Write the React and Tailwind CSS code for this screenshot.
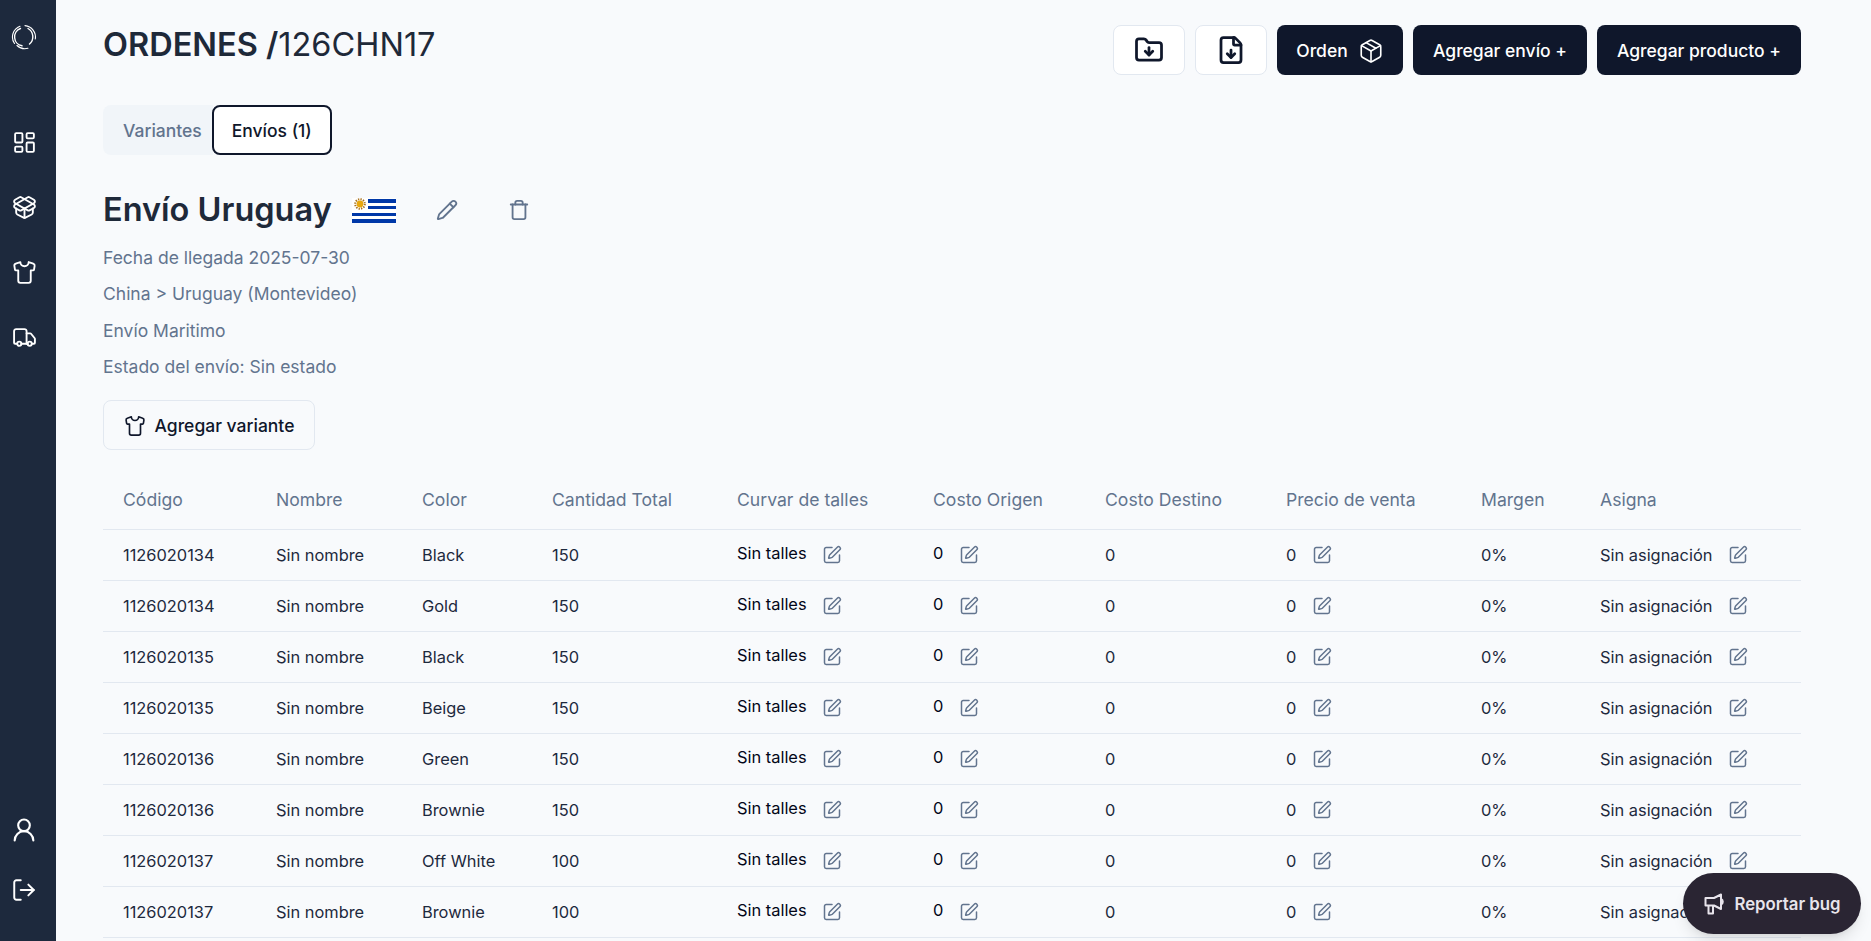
import { LayoutDashboard, PackageOpen, Shirt, Truck, UserRound, LogOut, FolderDown, FileDown, Package, Pencil, Trash, SquarePen } from "lucide-react"

const rows = [
  ["1126020134", "Black", "150"],
  ["1126020134", "Gold", "150"],
  ["1126020135", "Black", "150"],
  ["1126020135", "Beige", "150"],
  ["1126020136", "Green", "150"],
  ["1126020136", "Brownie", "150"],
  ["1126020137", "Off White", "100"],
  ["1126020137", "Brownie", "100"],
]

const headers = [
  ["Código", "w-[153px]"],
  ["Nombre", "w-[146px]"],
  ["Color", "w-[130px]"],
  ["Cantidad Total", "w-[185px]"],
  ["Curvar de talles", "w-[196px]"],
  ["Costo Origen", "w-[172px]"],
  ["Costo Destino", "w-[181px]"],
  ["Precio de venta", "w-[195px]"],
  ["Margen", "w-[119px]"],
  ["Asigna", "w-[221px]"],
]

function Logo() {
  return (
    <svg width="26" height="26" viewBox="0 0 26 26" fill="none" stroke="white" strokeLinecap="round">
      <path d="M9 2.2A11.5 11.5 0 0 0 3.5 19.5" strokeWidth="1.1" />
      <path d="M6 21.5A11.5 11.5 0 0 0 17 24.3" strokeWidth="1.1" />
      <path d="M14 1.6A11.5 11.5 0 0 1 24.3 15" strokeWidth="1.1" />
      <path d="M9.5 4.5A9 9 0 0 0 11 21.8" strokeWidth="1.4" />
      <path d="M17 4.5A9.5 9.5 0 0 1 18.5 20" strokeWidth="1.4" />
    </svg>
  )
}

function Flag() {
  return (
    <svg width="44" height="25" viewBox="0 0 44 25">
      <rect width="44" height="25" fill="white" />
      <rect x="16" y="1" width="28" height="4" fill="#0038a8" />
      <rect x="16" y="8" width="28" height="3" fill="#0038a8" />
      <rect x="0" y="15" width="44" height="3" fill="#0038a8" />
      <rect x="0" y="21" width="44" height="4" fill="#0038a8" />
      <circle cx="8" cy="6" r="4.8" fill="none" stroke="#a8701a" strokeWidth="2" strokeDasharray="1.3 1.2" />
      <circle cx="8" cy="6" r="3.4" fill="#e8a80f" />
    </svg>
  )
}

function Megaphone() {
  return (
    <svg width="24" height="24" viewBox="0 0 24 24" fill="none" stroke="currentColor" strokeWidth="2" strokeLinejoin="round">
      <path d="M2.5 6H11L18 2.5V17L11 13.5H2.5Z" />
      <path d="M5.5 13.5V21.5H10V13.5" />
      <path d="M18 7a3 3 0 0 1 0 5.5" />
    </svg>
  )
}

function EditCell({ children, gap, raised }) {
  return (
    <div className={`flex items-center ${gap}`}>
      <span className={raised ? "-translate-y-[2px] text-slate-950" : ""}>{children}</span>
      <SquarePen size={20} strokeWidth={1.8} className="text-slate-500" />
    </div>
  )
}

export default function App() {
  return (
    <div className="flex h-screen overflow-hidden bg-slate-50 font-['Inter',sans-serif] text-[17.5px] leading-6 relative">

      {/* Sidebar */}
      <div className="w-[56px] shrink-0 bg-slate-800 flex flex-col items-center pr-[8px] text-white">
        <div className="mt-6"><Logo /></div>
        <div className="mt-[80px] flex flex-col items-center gap-[40px]">
          <LayoutDashboard size={25} strokeWidth={1.8} />
          <PackageOpen size={25} strokeWidth={1.8} />
          <Shirt size={25} strokeWidth={1.8} />
          <Truck size={25} strokeWidth={1.8} />
        </div>
        <div className="mt-auto mb-[38px] flex flex-col items-center gap-[33px]">
          <UserRound size={28} strokeWidth={1.8} />
          <LogOut size={26} strokeWidth={1.8} />
        </div>
      </div>

      {/* Main */}
      <div className="flex-1 pl-[47px] pr-[70px] pt-[25px]">

        <div className="flex justify-between items-start">
          <h1 className="text-[32.5px] leading-[40px] text-gray-800">
            <span className="font-semibold">ORDENES /</span>126CHN17
          </h1>
          <div className="flex gap-[10px]">
            <button className="w-[72px] h-[50px] flex items-center justify-center bg-white border border-slate-200 rounded-lg text-slate-900">
              <FolderDown size={30} strokeWidth={2.2} />
            </button>
            <button className="w-[72px] h-[50px] flex items-center justify-center bg-white border border-slate-200 rounded-lg text-slate-900">
              <FileDown size={30} strokeWidth={2.2} />
            </button>
            <button className="w-[126px] h-[50px] pt-px flex items-center justify-center gap-[10px] bg-slate-900 rounded-lg text-white font-medium">
              Orden <Package size={26} strokeWidth={1.5} />
            </button>
            <button className="w-[174px] h-[50px] pt-px bg-slate-900 rounded-lg text-white font-medium">Agregar envío +</button>
            <button className="w-[204px] h-[50px] pt-px bg-slate-900 rounded-lg text-white font-medium">Agregar producto +</button>
          </div>
        </div>

        {/* Tabs */}
        <div className="mt-[30px] flex">
          <div className="h-[50px] pt-px bg-slate-100 rounded-l-lg pl-5 pr-[11px] flex items-center text-slate-500 font-medium">Variantes</div>
          <div className="h-[50px] pt-px w-[120px] -ml-px bg-white border-2 border-slate-900 rounded-lg flex items-center justify-center font-medium text-slate-900">Envíos (1)</div>
        </div>

        {/* Envio */}
        <div className="mt-[35px] flex items-center h-[40px]">
          <h2 className="text-[32.5px] font-semibold text-gray-800">Envío Uruguay</h2>
          <div className="ml-[20px]"><Flag /></div>
          <Pencil size={22} strokeWidth={2} className="ml-[40px] text-slate-500" />
          <Trash size={22} strokeWidth={2} className="ml-[50px] text-slate-500" />
        </div>
        <div className="mt-[16px] text-slate-500 flex flex-col gap-[12.4px]">
          <p>Fecha de llegada 2025-07-30</p>
          <p>China &gt; Uruguay (Montevideo)</p>
          <p>Envío Maritimo</p>
          <p>Estado del envío: Sin estado</p>
        </div>
        <button className="mt-[21px] w-[212px] h-[50px] pt-px flex items-center justify-center gap-[9px] border border-slate-200 rounded-lg text-slate-900 font-medium">
          <Shirt size={22} strokeWidth={1.8} /> Agregar variante
        </button>

        {/* Tabla */}
        <table className="mt-[24px] w-[1698px] table-fixed border-collapse">
          <thead>
            <tr className="h-[55px] border-b border-slate-200">
              {headers.map(([h, w]) => (
                <th key={h} className={`${w} pl-5 pb-[2px] text-left text-[17.6px] font-normal text-slate-500`}>{h}</th>
              ))}
            </tr>
          </thead>
          <tbody className="text-[16.4px] text-slate-800">
            {rows.map((r, i) => (
              <tr key={i} className="h-[51px] border-b border-slate-200">
                <td className="pl-5">{r[0]}</td>
                <td className="pl-5">Sin nombre</td>
                <td className="pl-5">{r[1]}</td>
                <td className="pl-5">{r[2]}</td>
                <td className="pl-5"><EditCell gap="gap-[15px]" raised>Sin talles</EditCell></td>
                <td className="pl-5"><EditCell gap="gap-[16px]" raised>0</EditCell></td>
                <td className="pl-5">0</td>
                <td className="pl-5"><EditCell gap="gap-[16px]">0</EditCell></td>
                <td className="pl-5">0%</td>
                <td className="pl-5"><EditCell gap="gap-[16px]">Sin asignación</EditCell></td>
              </tr>
            ))}
          </tbody>
        </table>
      </div>

      {/* Reportar bug */}
      <button className="absolute right-[10px] bottom-[7px] w-[178px] h-[61px] rounded-full bg-[#2a2533] shadow-lg flex items-center justify-center gap-[7px] text-[16.8px] text-[#e8e4ec] font-semibold">
        <Megaphone /> Reportar bug
      </button>
    </div>
  )
}
